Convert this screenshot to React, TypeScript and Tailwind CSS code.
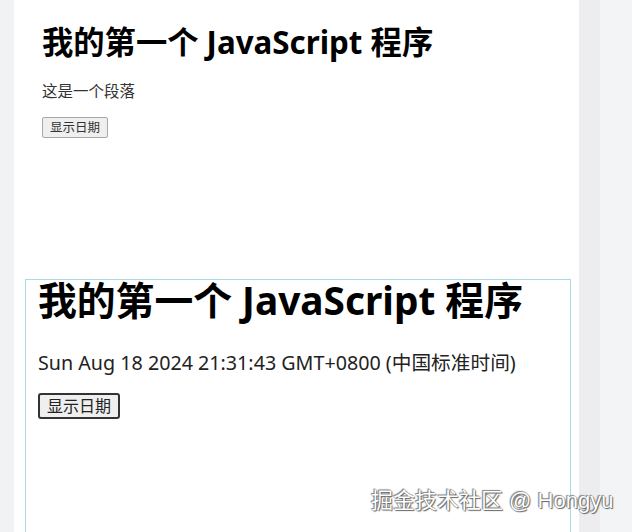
import React from "react";

export default function App() {
  const font = { fontFamily: '"Noto Sans", "Noto Sans CJK SC", sans-serif' };
  return (
    <div className="relative flex h-[532px] w-[632px] overflow-hidden bg-[#f3f4f6]" style={font}>
      <div className="w-[14px] shrink-0 bg-[#f1f2f4]" />
      <div className="flex w-[565px] shrink-0 flex-col bg-white">
        <div className="px-[28px] pt-[22px] h-[279px]">
          <h1 className="text-[31.3px] font-bold leading-[40px] text-black">我的第一个 JavaScript 程序</h1>
          <p className="mt-[19px] text-[15.5px] leading-[20px] text-[#333]">这是一个段落</p>
          <button className="mt-[16px] h-[21px] rounded-[2px] border border-[#a8a8a8] bg-[#efefef] px-[7px] text-[12.5px] leading-[17px] text-[#333]">显示日期</button>
        </div>
        <div className="ml-[11px] mr-[8px] flex-1 border border-b-0 border-[#a9dbe6] px-[12px]">
          <h1 className="-mt-[4px] text-[38.8px] font-bold leading-[48px] text-black">我的第一个 JavaScript 程序</h1>
          <p className="mt-[26px] text-[19.7px] leading-[26px] text-[#222]">Sun Aug 18 2024 21:31:43 GMT+0800 (中国标准时间)</p>
          <button className="mt-[17px] h-[26px] rounded-[3px] border-2 border-[#333] bg-[#efefef] px-[7px] text-[16px] leading-[20px] text-[#222]">显示日期</button>
        </div>
      </div>
      <div className="w-[21px] shrink-0 bg-[#ededef]" />
      <div className="flex-1 bg-[#f3f4f6]" />
      <div
        className="absolute left-[371px] top-[487px] text-[22px] leading-[28px] text-white"
        style={{ fontFamily: '"Liberation Sans", "Noto Sans CJK SC", sans-serif', textShadow: "0 0 1px #555, 1px 1px 1px #666, -1px -1px 1px #888" }}
      >
        掘金技术社区 @ Hongyu
      </div>
    </div>
  );
}
